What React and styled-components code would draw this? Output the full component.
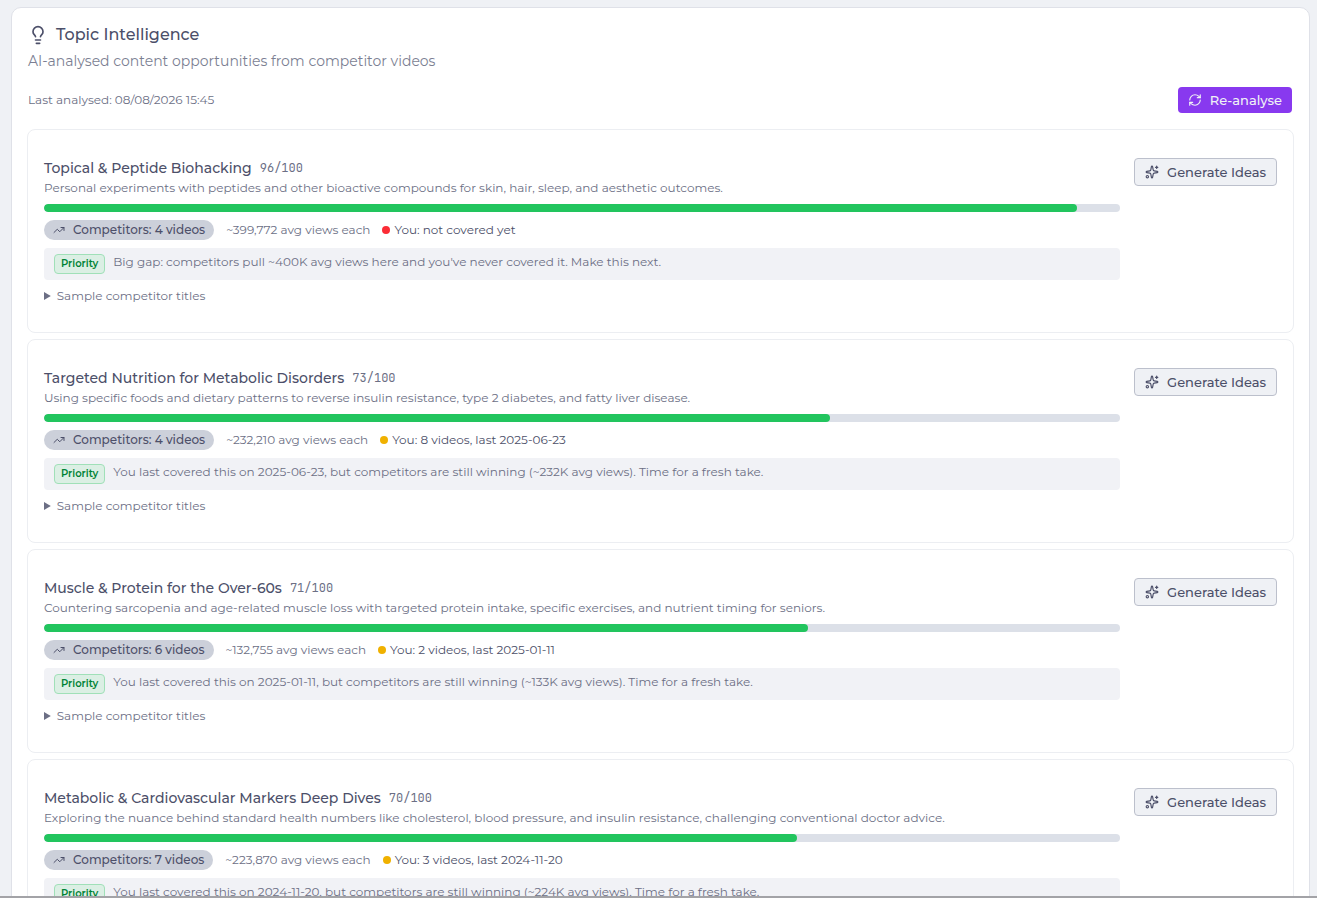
import React from 'react';
import styled, { createGlobalStyle } from 'styled-components';
import { Lightbulb, RefreshCw, Sparkles, TrendingUp } from 'lucide-react';

const GlobalStyle = createGlobalStyle`
  * {
    box-sizing: border-box;
  }
  body {
    margin: 0;
    background: #eff1f5;
    color: #4c4f69;
    font-family: Montserrat, Inter, sans-serif;
    font-size: 12px;
    line-height: 20px;
  }
`;

const Page = styled.main`
  height: 100vh;
  padding: 7px 7px 0 11px;
  overflow: hidden;
  border-bottom: 2px solid #a3a3a7;
`;

const Panel = styled.section`
  padding: 17px 16px 16px;
  background: #fff;
  border: 1px solid #dfe1e8;
  border-radius: 10px;
`;

const PanelTitle = styled.h1`
  display: flex;
  align-items: center;
  gap: 8px;
  margin: 0;
  font-size: 16px;
  font-weight: 500;
  line-height: 20px;
`;

const PanelText = styled.p`
  margin: 6px 0 0;
  color: #7c7f93;
  font-size: 14px;
  line-height: 20px;
`;

const Toolbar = styled.div`
  display: flex;
  align-items: center;
  justify-content: space-between;
  margin: 16px 1px 16px 0;
  color: #6c6f85;
`;

const Button = styled.button`
  display: inline-flex;
  align-items: center;
  gap: 8px;
  flex-shrink: 0;
  height: ${(props) => (props.$primary ? '26px' : '28px')};
  padding: 0 10px;
  border: ${(props) => (props.$primary ? 'none' : '1px solid #bcc0cc')};
  border-radius: 4px;
  background: ${(props) => (props.$primary ? '#8839ef' : '#eff1f5')};
  color: ${(props) => (props.$primary ? '#eff1f5' : '#4c4f69')};
  font: inherit;
  font-size: 13px;
  font-weight: 500;
  cursor: pointer;
`;

const TopicList = styled.div`
  display: flex;
  flex-direction: column;
  gap: 6px;
  margin: 0 -1px;
`;

const Card = styled.article`
  display: flex;
  align-items: flex-start;
  gap: 14px;
  padding: 28px 16px 26px;
  border: 1px solid #eceef2;
  border-radius: 8px;
`;

const CardBody = styled.div`
  flex: 1;
  min-width: 0;
`;

const CardHeader = styled.div`
  display: flex;
  align-items: center;
  gap: 8px;
`;

const CardTitle = styled.h2`
  margin: 0;
  font-size: 14px;
  font-weight: 500;
  line-height: 20px;
`;

const Score = styled.span`
  color: #6c6f85;
  font-family: 'JetBrains Mono', 'Liberation Mono', monospace;
  font-size: 12px;
`;

const Description = styled.p`
  margin: 0 0 6px;
  color: #6c6f85;
`;

const Track = styled.div`
  height: 8px;
  overflow: hidden;
  border-radius: 4px;
  background: #dce0e8;
`;

const Fill = styled.div`
  height: 100%;
  border-radius: 4px;
  background: #22c55e;
`;

const Stats = styled.div`
  display: flex;
  align-items: center;
  gap: 12px;
  margin: 8px 0;
`;

const Chip = styled.span`
  display: inline-flex;
  align-items: center;
  gap: 8px;
  padding: 0 9px;
  border-radius: 10px;
  background: #ccd0da;
  font-weight: 500;
`;

const Views = styled.span`
  color: #6c6f85;
`;

const Coverage = styled.span`
  display: inline-flex;
  align-items: center;
  gap: 4px;
`;

const Dot = styled.i`
  width: 8px;
  height: 8px;
  border-radius: 50%;
  background: ${(props) => (props.$missing ? '#fb2c36' : '#f0b100')};
`;

const Note = styled.div`
  display: flex;
  align-items: flex-start;
  gap: 8px;
  padding: 6px 10px;
  border-radius: 4px;
  background: #f1f2f6;
  color: #6c6f85;
`;

const NoteText = styled.span`
  line-height: 16px;
`;

const Badge = styled.span`
  padding: 0 6px;
  border: 1px solid #a0e0b8;
  border-radius: 4px;
  background: #dbefe4;
  color: #008236;
  font-size: 10px;
  font-weight: 600;
  line-height: 18px;
`;

const Samples = styled.details`
  margin-top: 6px;
  color: #6c6f85;
`;

const topics = [
  {
    title: 'Topical & Peptide Biohacking',
    score: 96,
    description: 'Personal experiments with peptides and other bioactive compounds for skin, hair, sleep, and aesthetic outcomes.',
    videos: 4,
    views: '399,772',
    coverage: 'not covered yet',
    missing: true,
    note: "Big gap: competitors pull ~400K avg views here and you've never covered it. Make this next.",
  },
  {
    title: 'Targeted Nutrition for Metabolic Disorders',
    score: 73,
    description: 'Using specific foods and dietary patterns to reverse insulin resistance, type 2 diabetes, and fatty liver disease.',
    videos: 4,
    views: '232,210',
    coverage: '8 videos, last 2025-06-23',
    note: 'You last covered this on 2025-06-23, but competitors are still winning (~232K avg views). Time for a fresh take.',
  },
  {
    title: 'Muscle & Protein for the Over-60s',
    score: 71,
    description: 'Countering sarcopenia and age-related muscle loss with targeted protein intake, specific exercises, and nutrient timing for seniors.',
    videos: 6,
    views: '132,755',
    coverage: '2 videos, last 2025-01-11',
    note: 'You last covered this on 2025-01-11, but competitors are still winning (~133K avg views). Time for a fresh take.',
  },
  {
    title: 'Metabolic & Cardiovascular Markers Deep Dives',
    score: 70,
    description: 'Exploring the nuance behind standard health numbers like cholesterol, blood pressure, and insulin resistance, challenging conventional doctor advice.',
    videos: 7,
    views: '223,870',
    coverage: '3 videos, last 2024-11-20',
    note: 'You last covered this on 2024-11-20, but competitors are still winning (~224K avg views). Time for a fresh take.',
  },
];

function TopicCard({ topic }) {
  return (
    <Card>
      <CardBody>
        <CardHeader>
          <CardTitle>{topic.title}</CardTitle>
          <Score>{topic.score}/100</Score>
        </CardHeader>
        <Description>{topic.description}</Description>
        <Track>
          <Fill style={{ width: `${topic.score}%` }} />
        </Track>
        <Stats>
          <Chip>
            <TrendingUp size={12} />
            Competitors: {topic.videos} videos
          </Chip>
          <Views>~{topic.views} avg views each</Views>
          <Coverage>
            <Dot $missing={topic.missing} />
            You: {topic.coverage}
          </Coverage>
        </Stats>
        <Note>
          <Badge>Priority</Badge>
          <NoteText>{topic.note}</NoteText>
        </Note>
        <Samples>
          <summary>Sample competitor titles</summary>
        </Samples>
      </CardBody>
      <Button type="button">
        <Sparkles size={14} />
        Generate Ideas
      </Button>
    </Card>
  );
}

function App() {
  return (
    <>
      <GlobalStyle />
      <Page>
        <Panel>
          <PanelTitle>
            <Lightbulb size={20} />
            Topic Intelligence
          </PanelTitle>
          <PanelText>AI-analysed content opportunities from competitor videos</PanelText>
          <Toolbar>
            <span>Last analysed: 08/08/2026 15:45</span>
            <Button type="button" $primary>
              <RefreshCw size={14} />
              Re-analyse
            </Button>
          </Toolbar>
          <TopicList>
            {topics.map((topic) => (
              <TopicCard key={topic.title} topic={topic} />
            ))}
          </TopicList>
        </Panel>
      </Page>
    </>
  );
}

export default App;
